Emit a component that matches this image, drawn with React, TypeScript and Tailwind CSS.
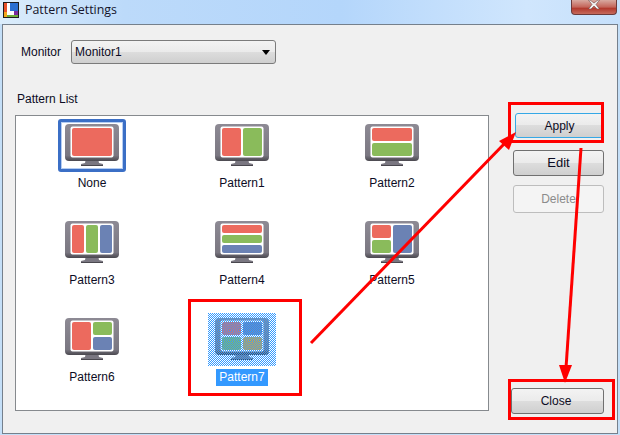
type Tile = [number, number, number, number, string];

const RED = "#ec6a5e";
const GREEN = "#8abb5b";
const BLUE = "#6b82b4";
const ORANGE = "#e5a92f";

const patterns: { name: string; tiles: Tile[] }[] = [
  { name: "None", tiles: [[7, 4, 40, 28, RED]] },
  { name: "Pattern1", tiles: [[7, 4, 19, 28, RED], [28, 4, 19, 28, GREEN]] },
  { name: "Pattern2", tiles: [[7, 4, 40, 13, RED], [7, 19, 40, 13, GREEN]] },
  { name: "Pattern3", tiles: [[7, 4, 12, 28, RED], [21, 4, 12, 28, GREEN], [35, 4, 12, 28, BLUE]] },
  { name: "Pattern4", tiles: [[7, 4, 40, 8, RED], [7, 14, 40, 8, GREEN], [7, 24, 40, 8, BLUE]] },
  { name: "Pattern5", tiles: [[7, 4, 19, 13, RED], [7, 19, 19, 13, GREEN], [28, 4, 19, 28, BLUE]] },
  { name: "Pattern6", tiles: [[7, 4, 19, 28, RED], [28, 4, 19, 13, GREEN], [28, 19, 19, 13, BLUE]] },
  { name: "Pattern7", tiles: [[7, 4, 19, 13, RED], [28, 4, 19, 13, BLUE], [7, 19, 19, 13, GREEN], [28, 19, 19, 13, ORANGE]] },
];

function MonitorIcon({ tiles }: { tiles: Tile[] }) {
  return (
    <svg width="54" height="42" viewBox="0 0 54 42" className="block">
      <defs>
        <linearGradient id="body" x1="0" y1="0" x2="0" y2="1">
          <stop offset="0" stopColor="#8d8a94" />
          <stop offset="0.85" stopColor="#7a7781" />
          <stop offset="1" stopColor="#4a484f" />
        </linearGradient>
      </defs>
      <path d="M21 34h12l1 5 4 1v2H16v-2l4-1z" fill="#7a7781" />
      <rect x="16" y="41" width="22" height="1" fill="#4a484f" />
      <rect x="0" y="0" width="54" height="37" rx="4" fill="url(#body)" />
      <rect x="5.5" y="2.5" width="43" height="31" rx="2" fill="#ffffff" />
      {tiles.map(([x, y, w, h, c], i) => (
        <rect key={i} x={x} y={y} width={w} height={h} rx="2" fill={c} />
      ))}
    </svg>
  );
}

// 1px checker laid over the selected icon
function Dither() {
  return (
    <svg width="68" height="53" viewBox="0 0 68 53" shapeRendering="crispEdges" className="absolute -left-[7px] -top-[5px]">
      <defs>
        <pattern id="dither" width="2" height="2" patternUnits="userSpaceOnUse">
          <rect x="0" y="0" width="1" height="1" fill="#3399ff" />
          <rect x="1" y="1" width="1" height="1" fill="#3399ff" />
        </pattern>
      </defs>
      <rect width="68" height="53" fill="url(#dither)" />
    </svg>
  );
}

function PatternCell({ name, tiles, index }: { name: string; tiles: Tile[]; index: number }) {
  const focused = index === 0;
  const selected = index === 7;
  return (
    <div className="h-[97px] flex flex-col items-center">
      <div className="relative w-[54px] h-[42px]">
        {focused && (
          <div className="absolute -left-[7px] -top-[5px] w-[68px] h-[53px] rounded-[3px] border-[3px] border-[#3b6fc6] bg-[#b5cdf2]" />
        )}
        {focused && <div className="absolute -left-[3px] -top-[1px] w-[60px] h-[45px] bg-white" />}
        <div className="relative">
          <MonitorIcon tiles={tiles} />
        </div>
        {selected && <Dither />}
      </div>
      <div
        className={
          "mt-[9px] h-[17px] px-[3px] leading-[16px] " +
          (selected ? "bg-[#3399ff] text-white" : "text-[#0c0c24]")
        }
      >
        {name}
      </div>
    </div>
  );
}

const btnFace =
  "rounded-[3px] border bg-[linear-gradient(to_bottom,#f3f3f3_0%,#ebebeb_48%,#dddddd_50%,#cfcfcf_100%)] text-[#0c0c24] flex items-center justify-center";

export default function App() {
  return (
    <div className="relative w-[620px] h-[435px] overflow-hidden bg-[#c4dff8] font-['Liberation_Sans',Arial,sans-serif] text-[12px]">
      {/* title bar */}
      <div className="relative h-[24px] flex items-center bg-[linear-gradient(to_right,#dcedfb_0%,#bcdafa_20%,#b4d6fb_55%,#d0e6fd_85%,#c6e0fb_100%)]">
        <svg width="16" height="16" viewBox="0 0 16 16" className="ml-[3px] -mt-[4px]">
          <rect width="16" height="16" fill="#1d1d1d" />
          <rect x="1" y="1" width="5" height="9" fill="#e8522a" />
          <rect x="6" y="1" width="9" height="3" fill="#d83a2a" />
          <rect x="1" y="10" width="3" height="5" fill="#f2a71b" />
          <rect x="4" y="13" width="11" height="2" fill="#6fae3a" />
          <rect x="6" y="4" width="9" height="9" fill="#ffffff" />
          <rect x="11" y="9" width="4" height="4" fill="#7a2a9c" />
          <rect x="4" y="1" width="3" height="12" fill="#ffffff" />
          <rect x="4" y="10" width="7" height="3" fill="#ffffff" />
          <rect x="7" y="1" width="8" height="8" fill="#2a6fd0" />
        </svg>
        <span className="ml-[6px] -mt-[3px] font-['Open_Sans',sans-serif] text-[12.4px] text-[#14142a]">Pattern Settings</span>
        <div className="absolute left-[571px] top-0 w-[46px] h-[15px] rounded-b-[4px] border border-t-0 border-[#6b3a3a] bg-[linear-gradient(to_bottom,#d8a9a0_0%,#c4655a_50%,#b23a2e_60%,#c66a5c_100%)] flex items-start justify-center">
          <svg width="12" height="9" viewBox="0 0 12 9">
            <path d="M2 0l4 3 4-3h1.5L8 4.5 11.5 9H9L6 6 3 9H.5L4 4.5.5 0z" fill="#f2f2f2" stroke="#5a3030" strokeWidth="0.5" />
          </svg>
        </div>
      </div>

      {/* dialog body */}
      <div className="ml-[2px] w-[616px] h-[410px] border border-[#75808c] bg-[#f0f0f0] pt-[15px]">
        <div className="flex items-center pl-[18px]">
          <span className="w-[50px] text-[#0c0c24]">Monitor</span>
          <div className={btnFace + " w-[205px] h-[24px] border-[#7b7b7b] !justify-between pl-[3px] pr-[4px]"}>
            <span>Monitor1</span>
            <span className="mr-[1px] w-0 h-0 border-x-[4px] border-t-[5px] border-x-transparent border-t-black" />
          </div>
        </div>

        <div className="mt-[28px] ml-[14px] leading-[14px] text-[#0c0c24]">Pattern List</div>

        <div className="mt-[9px] ml-[12px] flex items-start">
          <div className="w-[474px] h-[296px] border border-[#868a8e] bg-white pt-[8px] pl-[1px]">
            <div className="grid grid-cols-3 w-[450px]">
              {patterns.map((p, i) => (
                <PatternCell key={p.name} name={p.name} tiles={p.tiles} index={i} />
              ))}
            </div>
          </div>

          <div className="ml-[24px] -mt-[2px] w-[91px] flex flex-col">
            <div className={btnFace + " ml-[2px] h-[25px] border-[#35a8e6]"}>Apply</div>
            <div className={btnFace + " mt-[12px] h-[26px] border-[#707070] text-[13px]"}>Edit</div>
            <div className="mt-[9px] h-[28px] rounded-[3px] border border-[#bdbdbd] bg-[#f4f4f4] text-[#8b8b8b] flex items-center justify-center">
              Delete
            </div>
            <div className={btnFace + " mt-[175px] -ml-[2px] w-[93px] h-[26px] border-[#707070] pr-[3px]"}>Close</div>
          </div>
        </div>
      </div>

      {/* red annotations drawn over the screenshot */}
      <div className="absolute left-[508px] top-[102px] w-[96px] h-[41px] border-[3px] border-[#ff0000]" />
      <div className="absolute left-[188px] top-[299px] w-[114px] h-[97px] border-[3px] border-[#ff0000]" />
      <div className="absolute left-[508px] top-[379px] w-[107px] h-[41px] border-[3px] border-[#ff0000]" />
      <svg width="620" height="435" viewBox="0 0 620 435" className="absolute left-0 top-0 pointer-events-none">
        <path d="M311 343L505 143" stroke="#ff0000" strokeWidth="3" fill="none" />
        <path d="M516 132L499 141L509 150z" fill="#ff0000" />
        <path d="M581 148L566 368" stroke="#ff0000" strokeWidth="3" fill="none" />
        <path d="M565 383L559 365L572 365z" fill="#ff0000" />
      </svg>
    </div>
  );
}
